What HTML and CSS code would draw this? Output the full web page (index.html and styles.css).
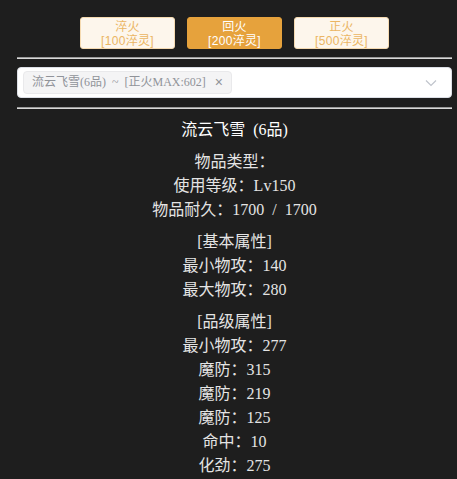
FILE: index.html
```html
<!DOCTYPE html>
<html lang="zh">
<head>
<meta charset="utf-8">
<link rel="stylesheet" href="styles.css">
</head>
<body>
<div class="wrap">
  <div class="btns">
    <button class="btn plain">淬火<br>[100淬灵]</button>
    <button class="btn solid">回火<br>[200淬灵]</button>
    <button class="btn plain">正火<br>[500淬灵]</button>
  </div>
  <div class="rule"></div>
  <div class="select">
    <span class="tag">流云飞雪(6品) ~ [正火MAX:602]<span class="x">×</span></span>
    <svg class="chev" width="12" height="8" viewBox="0 0 12 8"><polyline points="1,1.5 6,6.5 11,1.5" fill="none" stroke="#c0c4cc" stroke-width="1.2"/></svg>
  </div>
  <div class="rule rule2"></div>
  <div class="info">
    <div class="title">流云飞雪 (6品)</div>
    <div class="group">
      <div class="ln">物品类型：</div>
      <div class="ln">使用等级：Lv150</div>
      <div class="ln">物品耐久：1700 / 1700</div>
    </div>
    <div class="group">
      <div class="ln">[基本属性]</div>
      <div class="ln">最小物攻：140</div>
      <div class="ln">最大物攻：280</div>
    </div>
    <div class="group">
      <div class="ln">[品级属性]</div>
      <div class="ln">最小物攻：277</div>
      <div class="ln">魔防：315</div>
      <div class="ln">魔防：219</div>
      <div class="ln">魔防：125</div>
      <div class="ln">命中：10</div>
      <div class="ln">化劲：275</div>
    </div>
  </div>
</div>
</body>
</html>
```
FILE: styles.css
```css
html, body {
  margin: 0;
  padding: 0;
  background: #1e1e1e;
  overflow: hidden;
}
.wrap {
  padding: 0 5px 0 17px;
}
.btns {
  display: flex;
  justify-content: center;
  gap: 12px;
  padding-top: 17px;
}
.btn {
  width: 95px;
  height: 32px;
  padding: 2px 0;
  box-sizing: border-box;
  border-radius: 3px;
  font-family: "Liberation Sans", "Noto Sans CJK SC", sans-serif;
  font-size: 12px;
  line-height: 14px;
  letter-spacing: 0.3px;
  text-align: center;
}
.plain {
  background: #fdf6ec;
  border: 1px solid #f5dab1;
  color: #ebb563;
}
.solid {
  background: #e6a23c;
  border: 1px solid #e6a23c;
  color: #fff;
}
.rule {
  margin-top: 8px;
  height: 2px;
  background: #d8d8d8;
  border-top: 1px solid #9a9a9a;
  box-sizing: border-box;
}
.rule2 {
  margin-top: 9px;
}
.select {
  margin-top: 8px;
  height: 31px;
  box-sizing: border-box;
  background: #fff;
  border: 1px solid #dcdfe6;
  border-radius: 4px;
  display: flex;
  align-items: center;
  padding: 0 14px 0 5px;
}
.tag {
  height: 23px;
  box-sizing: border-box;
  background: #f4f4f5;
  border: 1px solid #e9e9eb;
  border-radius: 4px;
  color: #909399;
  font-family: "Liberation Serif", "Noto Sans CJK SC", serif;
  font-size: 12px;
  line-height: 21px;
  word-spacing: 3px;
  padding: 0 8px;
  display: flex;
  align-items: center;
  gap: 8px;
  width: 209px;
}
.x {
  font-family: "Liberation Sans", sans-serif;
  font-size: 14px;
  margin-left: auto;
}
.chev {
  margin-left: auto;
}
.info {
  margin-top: 9px;
  text-align: center;
  font-family: "Liberation Serif", "Noto Sans CJK SC", serif;
  font-size: 16px;
  line-height: 24px;
  word-spacing: 4px;
  color: #e4e4e4;
}
.title {
  color: #fff;
}
.group {
  margin-top: 8px;
}
.group:first-of-type {
  margin-top: 7px;
}
```
